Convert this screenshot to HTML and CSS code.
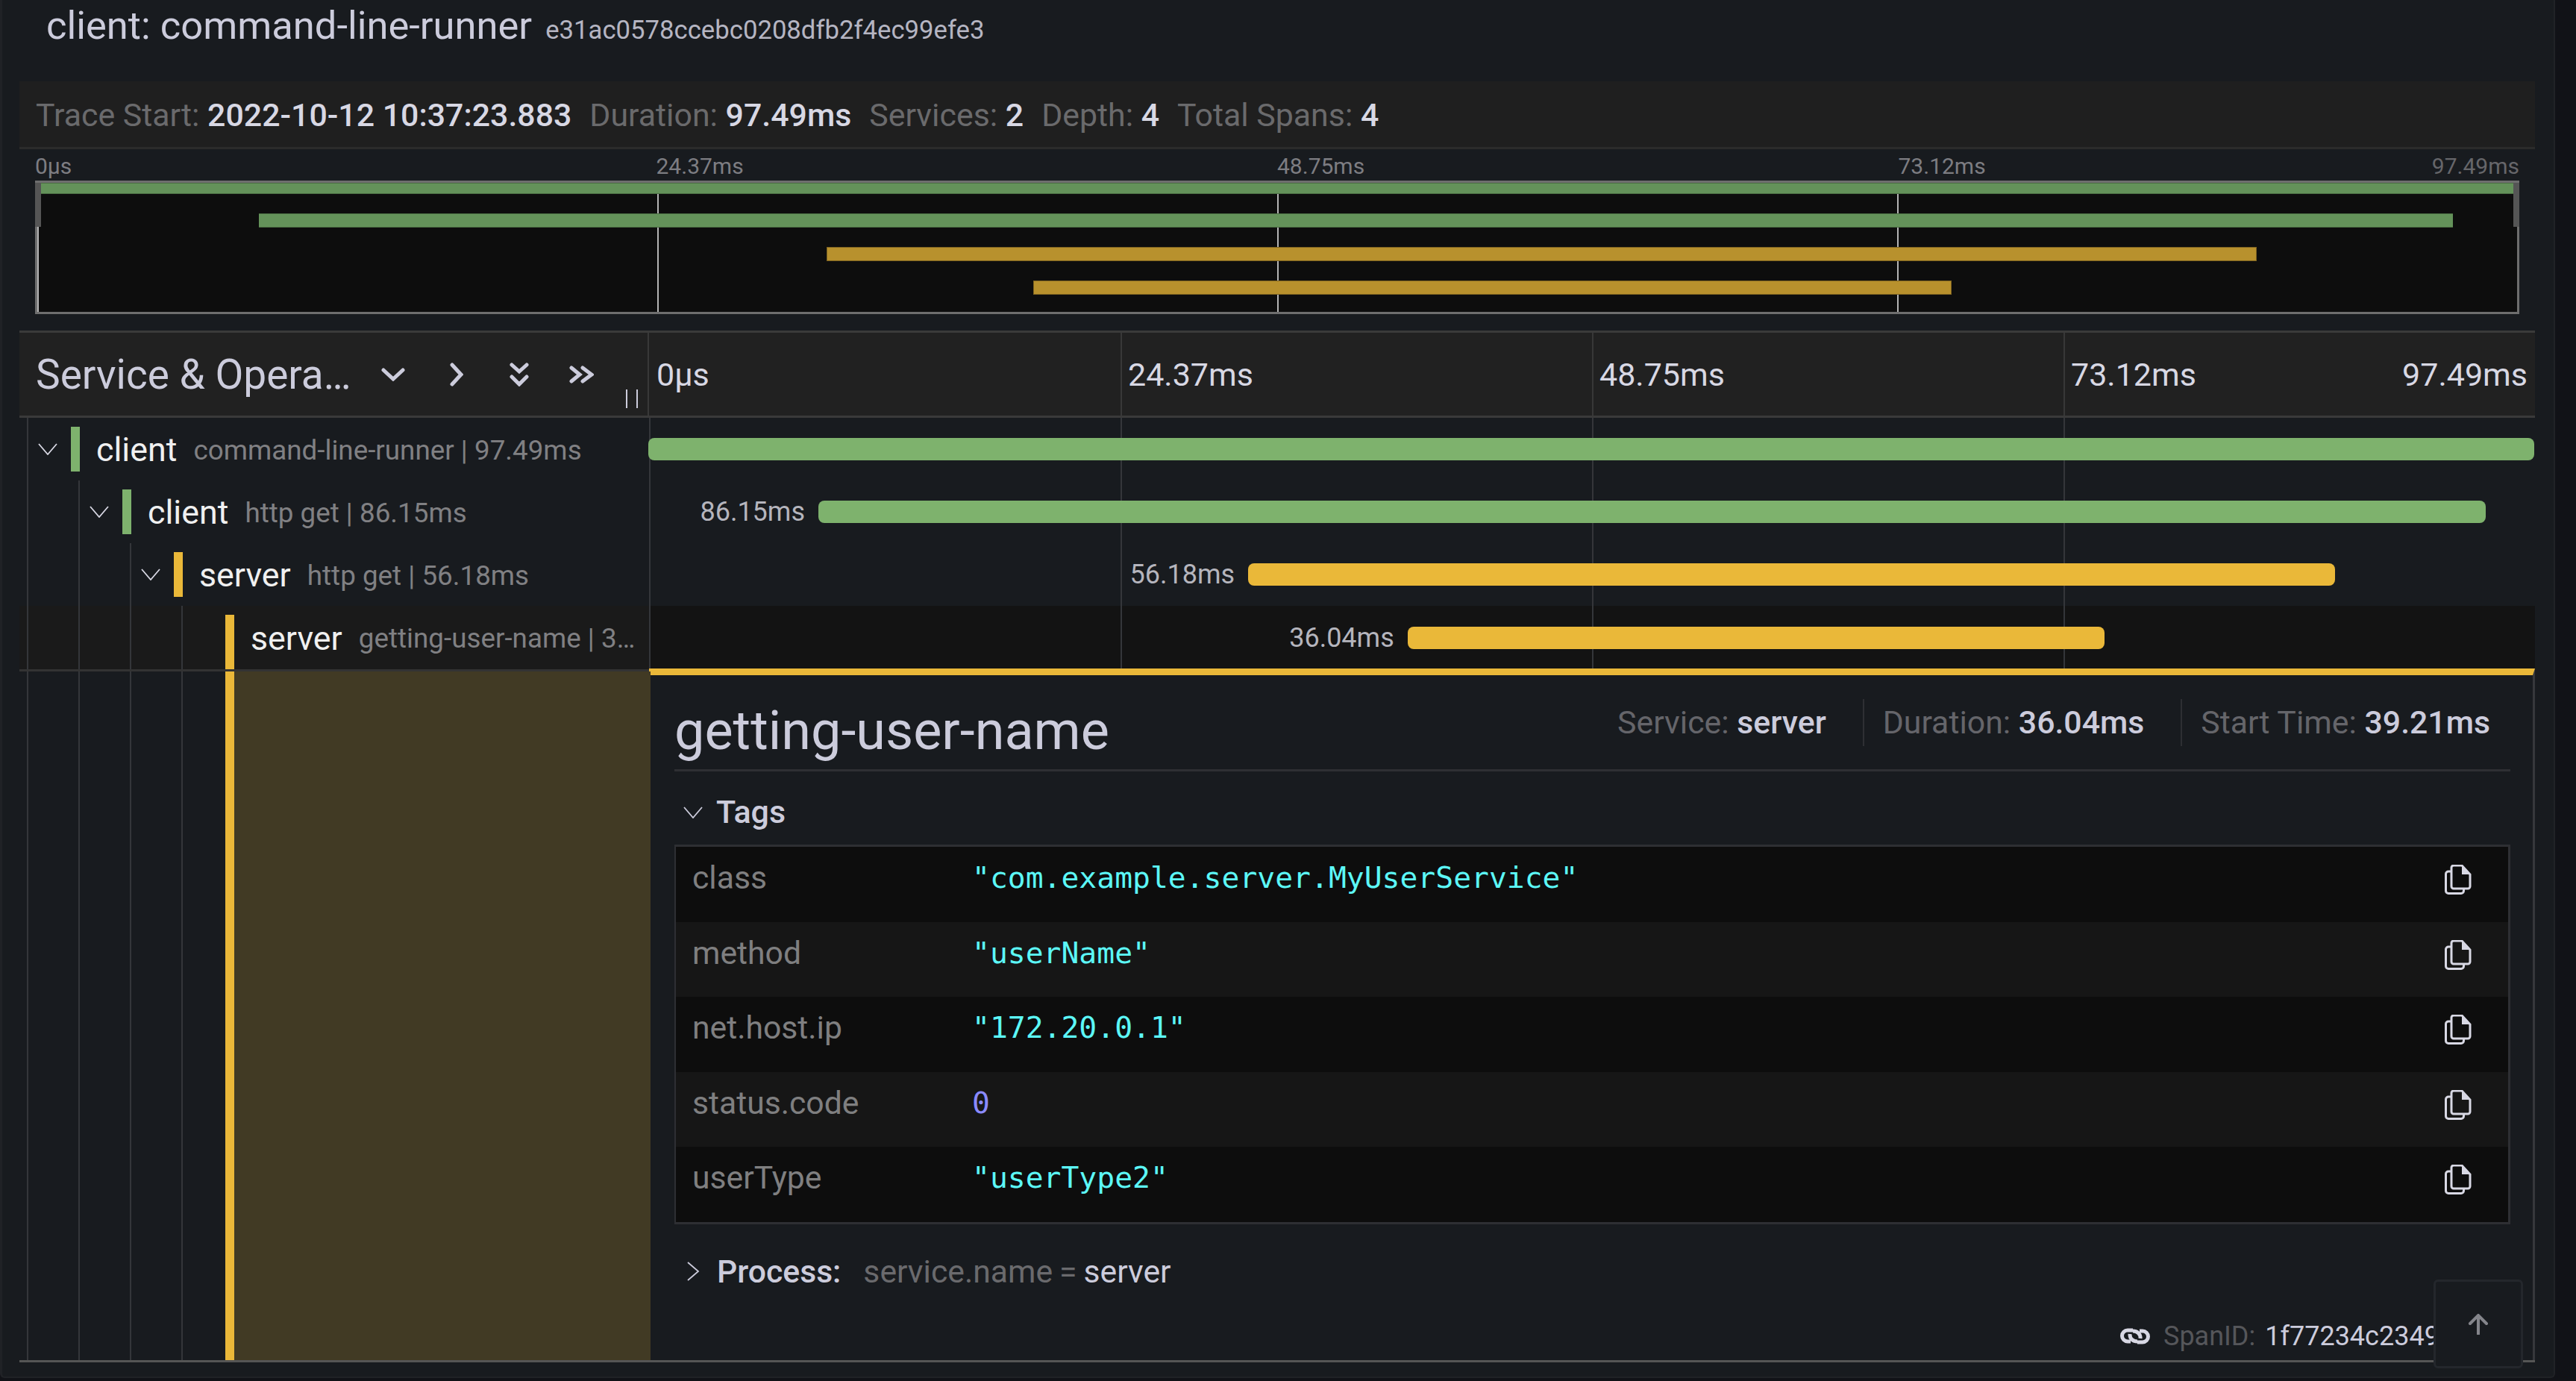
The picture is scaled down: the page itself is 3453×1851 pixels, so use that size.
FILE: index.html
```html
<!DOCTYPE html>
<html lang="en">
<head>
    <meta charset="UTF-8">
    <title>Trace view</title>
    <link rel="stylesheet" href="styles.css">
</head>
<body>
    <svg class="defs" width="0" height="0">
        <symbol id="copy" viewBox="0 0 36 40">
            <path d="M9 4a3 3 0 0 1 3-3h11l11 12v16a3 3 0 0 1-3 3H12a3 3 0 0 1-3-3z" fill="none" stroke="currentColor" stroke-width="3"/>
            <path d="M23 2l10 11H23z" fill="currentColor"/>
            <path d="M9 9H5a3.500 3.500 0 0 0-3.500 3.500V35A3.500 3.500 0 0 0 5 38.500h17a3.500 3.500 0 0 0 3.500-3.500v-3" fill="none" stroke="currentColor" stroke-width="3"/>
        </symbol>
        <symbol id="thin-down" viewBox="0 0 26 16">
            <path d="M1 1l12 14L25 1" fill="none" stroke="currentColor" stroke-width="1.800"/>
        </symbol>
    </svg>

    <div class="panel">
        <div class="title-row">
            <span class="trace-title">client: command-line-runner</span>
            <span class="trace-id">e31ac0578ccebc0208dfb2f4ec99efe3</span>
        </div>

        <div class="stats">
            <span class="stat">Trace Start: <b>2022-10-12 10:37:23.883</b></span>
            <span class="stat">Duration: <b>97.49ms</b></span>
            <span class="stat">Services: <b>2</b></span>
            <span class="stat">Depth: <b>4</b></span>
            <span class="stat">Total Spans: <b>4</b></span>
        </div>

        <div class="minimap">
            <div class="minimap-labels">
                <span>0µs</span>
                <span>24.37ms</span>
                <span>48.75ms</span>
                <span>73.12ms</span>
                <span class="last">97.49ms</span>
            </div>
            <div class="minimap-box">
                <div class="mini-row first"><div class="mini-bar green" style="margin-left:0;width:100%"></div></div>
                <div class="mini-row"><div class="mini-bar green" style="margin-left:8.81%;width:88.75%"></div></div>
                <div class="mini-row"><div class="mini-bar yellow" style="margin-left:31.76%;width:57.87%"></div></div>
                <div class="mini-row"><div class="mini-bar yellow" style="margin-left:40.14%;width:37.15%"></div></div>
                <span class="handle left"></span>
                <span class="handle right"></span>
            </div>
        </div>

        <div class="view-header">
            <div class="name-col header-name">
                <span class="header-title">Service &amp; Operations</span>
                <svg class="hicon" width="32" height="18" viewBox="0 0 32 18"><path d="M3 3l13 12L29 3" fill="none" stroke="currentColor" stroke-width="5" stroke-linecap="round"/></svg>
                <svg class="hicon" width="18" height="32" viewBox="0 0 18 32"><path d="M3 3l12 13L3 29" fill="none" stroke="currentColor" stroke-width="5" stroke-linecap="round"/></svg>
                <svg class="hicon" width="26" height="32" viewBox="0 0 26 32"><path d="M3 3l10 9 10-9M3 19l10 10 10-10" fill="none" stroke="currentColor" stroke-width="5" stroke-linecap="round"/></svg>
                <svg class="hicon" width="33" height="24" viewBox="0 0 33 24"><path d="M3 3l11 9L3 21M18 3l12 9-12 9" fill="none" stroke="currentColor" stroke-width="5" stroke-linecap="round"/></svg>
                <span class="resizer"></span>
            </div>
            <div class="ticks">
                <span>0µs</span>
                <span>24.37ms</span>
                <span>48.75ms</span>
                <span>73.12ms</span>
                <span class="last">97.49ms</span>
            </div>
        </div>

        <div class="row">
            <div class="name-col">
                <span class="guide last"><svg class="chev"><use href="#thin-down"/></svg></span>
                <span class="svc-bar green"></span>
                <span class="svc-name">client</span>
                <span class="op-name">command-line-runner | 97.49ms</span>
            </div>
            <div class="track">
                <div class="span-bar green" style="margin-left:-1px;width:100%"></div>
            </div>
        </div>

        <div class="row">
            <div class="name-col">
                <span class="guide"></span>
                <span class="guide last"><svg class="chev"><use href="#thin-down"/></svg></span>
                <span class="svc-bar green"></span>
                <span class="svc-name">client</span>
                <span class="op-name">http get | 86.15ms</span>
            </div>
            <div class="track">
                <span class="span-label" style="width:8.98%">86.15ms</span>
                <div class="span-bar green" style="width:88.4%"></div>
            </div>
        </div>

        <div class="row">
            <div class="name-col">
                <span class="guide"></span>
                <span class="guide"></span>
                <span class="guide last"><svg class="chev"><use href="#thin-down"/></svg></span>
                <span class="svc-bar yellow"></span>
                <span class="svc-name">server</span>
                <span class="op-name">http get | 56.18ms</span>
            </div>
            <div class="track">
                <span class="span-label" style="width:31.77%">56.18ms</span>
                <div class="span-bar yellow" style="width:57.63%"></div>
            </div>
        </div>

        <div class="row selected">
            <div class="name-col">
                <span class="guide"></span>
                <span class="guide"></span>
                <span class="guide"></span>
                <span class="guide last"></span>
                <span class="svc-bar yellow tall"></span>
                <span class="svc-name">server</span>
                <span class="op-name">getting-user-name | 36.04ms</span>
            </div>
            <div class="track">
                <span class="span-label" style="width:40.22%">36.04ms</span>
                <div class="span-bar yellow" style="width:36.97%"></div>
            </div>
        </div>

        <div class="detail-row">
            <div class="name-col detail-name">
                <span class="guide"></span>
                <span class="guide"></span>
                <span class="guide"></span>
                <span class="guide last"></span>
                <span class="svc-bar yellow tall"></span>
                <span class="detail-fill"></span>
            </div>
            <div class="detail">
                <div class="detail-head">
                    <h1 class="op-title">getting-user-name</h1>
                    <div class="overview">
                        <span class="ov-item">Service: <b>server</b></span>
                        <span class="ov-item">Duration: <b>36.04ms</b></span>
                        <span class="ov-item">Start Time: <b>39.21ms</b></span>
                    </div>
                </div>

                <div class="tags-head">
                    <svg class="chev"><use href="#thin-down"/></svg>
                    <b>Tags</b>
                </div>

                <div class="kv-table">
                    <div class="kv"><span class="key">class</span><span class="val">"com.example.server.MyUserService"</span><svg class="copy"><use href="#copy"/></svg></div>
                    <div class="kv"><span class="key">method</span><span class="val">"userName"</span><svg class="copy"><use href="#copy"/></svg></div>
                    <div class="kv"><span class="key">net.host.ip</span><span class="val">"172.20.0.1"</span><svg class="copy"><use href="#copy"/></svg></div>
                    <div class="kv"><span class="key">status.code</span><span class="val num">0</span><svg class="copy"><use href="#copy"/></svg></div>
                    <div class="kv"><span class="key">userType</span><span class="val">"userType2"</span><svg class="copy"><use href="#copy"/></svg></div>
                </div>

                <div class="process">
                    <svg class="chev-right" viewBox="0 0 17 26"><path d="M1 1l14 12L1 25" fill="none" stroke="currentColor" stroke-width="1.800"/></svg>
                    <b>Process:</b>
                    <span class="proc-key">service.name</span>
                    <span class="proc-eq">=</span>
                    <span class="proc-val">server</span>
                </div>

                <div class="span-id">
                    <svg class="link" width="40" height="22" viewBox="0 0 40 22">
                        <path d="M17 3H10a7.500 7.500 0 0 0 0 15h4M23 19h7a7.500 7.500 0 0 0 0-15h-4" fill="none" stroke="currentColor" stroke-width="5"/>
                        <path d="M13 8a5 5 0 0 0 0 1c0 5 4 9 10 9M27 14a5 5 0 0 0 0-1c0-5-4-9-10-9" fill="none" stroke="currentColor" stroke-width="5"/>
                    </svg>
                    <span class="span-id-label">SpanID:</span>
                    <span class="span-id-val">1f77234c2349</span>
                </div>
            </div>
        </div>
        <div class="panel-foot"></div>

        <button class="to-top">
            <svg width="28" height="28" viewBox="0 0 28 28"><path d="M14 27V3M3 13L14 2l11 11" fill="none" stroke="currentColor" stroke-width="4" stroke-linecap="round"/></svg>
        </button>
    </div>
</body>
</html>
```

FILE: styles.css
```css
* {
    box-sizing: border-box;
}
html, body {
    margin: 0;
    padding: 0;
    height: 1851px;
    overflow: hidden;
    background: #111217;
    font-family: Roboto, "Liberation Sans", sans-serif;
    color: #ccccdc;
}
b {
    font-weight: 500;
}
.defs {
    display: none;
}

/* outer panel */
.panel {
    position: relative;
    width: 3425px;
    height: 1847px;
    background: #181b1f;
    border-left: 3px solid #202226;
    border-right: 2px solid #202226;
    border-bottom: 2px solid #202226;
    border-bottom-left-radius: 6px;
    border-bottom-right-radius: 6px;
    padding: 0 25px 0 23px;
}

/* title */
.title-row {
    height: 109px;
    padding: 4px 0 0 36px;
    display: flex;
    align-items: baseline;
    gap: 18px;
    line-height: 60px;
}
.trace-title {
    font-size: 52.500px;
}
.trace-id {
    font-size: 34.700px;
    color: #b5b5c2;
}

/* stats bar */
.stats {
    height: 91px;
    background: #1f1f1f;
    border-bottom: 3px solid #2b2b2b;
    padding: 2px 0 0 22px;
    display: flex;
    align-items: center;
    gap: 24px;
    font-size: 42.850px;
    color: #6a6a6c;
}
.stats b {
    color: #d8d8e4;
}

/* minimap */
.minimap {
    height: 243px;
    padding: 0 21px;
}
.minimap-labels {
    height: 42px;
    display: grid;
    grid-template-columns: repeat(4, 1fr) auto;
    align-items: center;
    font-size: 30px;
    color: #7d7d82;
    padding-top: 2px;
}
.minimap-labels span {
    white-space: nowrap;
}
.minimap-labels .last {
    color: #66666a;
    margin-left: -130px;
    width: 130px;
    text-align: right;
}
.minimap-box {
    position: relative;
    height: 179px;
    border: 3px solid #6e6e6e;
    background: #0d0d0d linear-gradient(to right, #b4b4b4 2px, transparent 2px) 0 0 / 25% 100%;
    padding: 0 5px;
}
.mini-row {
    height: 44.800px;
    padding-top: 0;
}
.mini-row.first {
    height: 41px;
}
.mini-row .mini-bar {
    height: 19px;
}
.mini-row.first .mini-bar {
    height: 15px;
}
.mini-bar.green {
    background: #64925a;
    border-bottom: 1px solid #4b6e43;
    border-top: 1px solid #4b6e43;
}
.mini-bar.yellow {
    background: #b8912d;
    border: 1px solid #7e6320;
}
.handle {
    position: absolute;
    top: 0;
    width: 8px;
    height: 59px;
    background: #555;
}
.handle.left {
    left: -3px;
}
.handle.right {
    right: -3px;
}

/* columns */
.name-col {
    width: 844px;
    flex: none;
    display: flex;
    align-items: center;
    padding-left: 10px;
    min-width: 0;
}

/* header row */
.view-header {
    height: 117px;
    background: #212121;
    border-top: 3px solid #3a3a3a;
    border-bottom: 3px solid #3a3a3a;
    display: flex;
}
.header-name {
    position: relative;
    padding-left: 22px;
    border-right: 2px solid #383838;
}
.header-title {
    width: 424px;
    font-size: 55px;
    white-space: nowrap;
    overflow: hidden;
    text-overflow: ellipsis;
}
.hicon {
    flex: none;
    color: #ccccdc;
    margin-left: 39px;
}
.hicon:nth-of-type(1) {
    margin-left: 39px;
    margin-top: 0;
}
.hicon:nth-of-type(2) {
    margin-left: 60px;
}
.hicon:nth-of-type(3) {
    margin-left: 62px;
}
.hicon:nth-of-type(4) {
    margin-left: 54px;
}
.resizer {
    position: absolute;
    left: 813px;
    top: 76px;
    width: 16px;
    height: 25px;
    border-left: 2px solid #ccccdc;
    border-right: 2px solid #ccccdc;
}
.ticks {
    flex: 1;
    display: grid;
    grid-template-columns: repeat(4, 1fr) 0;
    align-items: center;
    font-size: 43px;
    color: #d8d8e4;
}
.ticks span {
    padding-left: 8px;
    height: 100%;
    display: flex;
    align-items: center;
    white-space: nowrap;
}
.ticks span:first-child {
    padding-left: 10px;
}
.ticks span + span {
    border-left: 2px solid #383838;
}
.ticks .last {
    border-left: none !important;
    margin-left: -190px;
    width: 180px;
    justify-content: flex-end;
}

/* span rows */
.row {
    height: 84px;
    display: flex;
}
.guide {
    flex: none;
    width: 69px;
    height: 100%;
    border-left: 2px solid #34363a;
    display: flex;
    align-items: center;
}
.guide.last {
    width: 59px;
}
.chev {
    width: 26px;
    height: 16px;
    margin-left: 13px;
    color: #d8d8e4;
    flex: none;
}
.svc-bar {
    flex: none;
    width: 12px;
    height: 60px;
}
.svc-bar.tall {
    height: 100%;
    margin-top: 24px;
}
.green {
    background: #7eb26d;
}
.yellow {
    background: #eab839;
}
.svc-name {
    flex: none;
    margin-left: 22px;
    padding-top: 1px;
    font-size: 44.800px;
    color: #f0f0f0;
}
.op-name {
    margin-left: 22px;
    padding-top: 2px;
    font-size: 36.800px;
    color: #808083;
    white-space: nowrap;
    overflow: hidden;
    text-overflow: ellipsis;
}
.track {
    flex: 1;
    display: flex;
    align-items: center;
    background: linear-gradient(to right, #34363a 2px, transparent 2px) 0 0 / 25% 100%;
}
.span-bar {
    height: 30px;
    border-radius: 8px;
    flex: none;
}
.span-label {
    flex: none;
    font-size: 36px;
    color: #b5b5bd;
    text-align: right;
    padding-right: 18px;
    white-space: nowrap;
}
.row.selected {
    height: 85px;
}
.row.selected .name-col {
    background: #1a1a1a;
    overflow: hidden;
}
.row.selected .track {
    background-color: #131313;
}

/* expanded detail */
.detail-row {
    height: 926px;
    display: flex;
}
.detail-name {
    border-top: 3px solid #333;
    padding-right: 0;
    align-items: stretch;
}
.detail-name .svc-bar.tall {
    margin-top: 0;
}
.detail-fill {
    flex: none;
    width: 558px;
    background: #413a24;
    position: relative;
    z-index: 1;
}
.detail {
    flex: 1;
    min-width: 0;
    border-top: 9px solid #eab839;
    border-right: 3px solid #36383c;
    padding: 0 30px 0 34px;
    margin-top: -1px;
    height: 927px;
    overflow: hidden;
}
.detail-head {
    height: 129px;
    border-bottom: 3px solid #2e2f33;
    display: flex;
    justify-content: space-between;
    align-items: flex-start;
}
.op-title {
    margin: 33px 0 0;
    font-size: 72px;
    font-weight: 400;
    line-height: 84px;
    color: #ccccdc;
}
.overview {
    display: flex;
    margin-top: 32px;
    font-size: 42.800px;
    color: #65656a;
}
.ov-item {
    height: 63px;
    line-height: 62px;
    padding: 0 49px 0 25px;
    border-left: 2px solid #2e2f33;
    white-space: nowrap;
}
.ov-item:first-child {
    border-left: none;
}
.ov-item:last-child {
    padding-right: 27px;
}
.ov-item b {
    color: #ccccdc;
}
.tags-head {
    height: 98px;
    padding-top: 10px;
    display: flex;
    align-items: center;
    font-size: 43px;
    color: #ccccdc;
}
.tags-head .chev {
    margin: 2px 18px 0 12px;
    color: #ccccdc;
}
.kv-table {
    border: 3px solid #2e2f33;
    border-width: 3px 3px 3px 2px;
}
.kv {
    height: 100.600px;
    display: flex;
    align-items: flex-start;
    padding: 16px 0 0 22px;
    background: #0d0d0d;
}
.kv:nth-child(even) {
    background: #161616;
}
.key {
    width: 375px;
    flex: none;
    font-size: 42.700px;
    line-height: 50px;
    color: #7f7f80;
}
.val {
    flex: 1;
    font-family: "DejaVu Sans Mono", "Liberation Mono", monospace;
    font-size: 39.700px;
    line-height: 50px;
    color: #5cf7f7;
}
.val.num {
    color: #8a8aff;
}
.copy {
    flex: none;
    width: 36px;
    height: 40px;
    margin: 8px 49px 0 0;
    color: #d8d8e4;
}
.process {
    height: 126px;
    display: flex;
    align-items: center;
    font-size: 42.700px;
    color: #ccccdc;
}
.chev-right {
    width: 17px;
    height: 26px;
    margin: 0 23px 0 17px;
    flex: none;
}
.proc-key {
    margin-left: 30px;
    color: #6a6a6d;
}
.proc-eq {
    margin: 0 9px;
    color: #6a6a6d;
}
.span-id {
    display: flex;
    align-items: center;
    padding-left: 1938px;
    margin-top: 4px;
    height: 40px;
    font-size: 36px;
    white-space: nowrap;
}
.link {
    flex: none;
    color: #d8d8e4;
}
.span-id-label {
    margin-left: 18px;
    color: #55565a;
}
.span-id-val {
    margin-left: 13px;
    color: #ccccdc;
}
.panel-foot {
    height: 3px;
    background: #555;
}
.to-top {
    position: absolute;
    right: 41px;
    bottom: 11px;
    width: 120px;
    height: 119px;
    background: #181b1f;
    border: 3px solid #24272c;
    border-radius: 6px;
    color: #84858b;
    padding: 0;
    display: flex;
    align-items: center;
    justify-content: center;
}
```
